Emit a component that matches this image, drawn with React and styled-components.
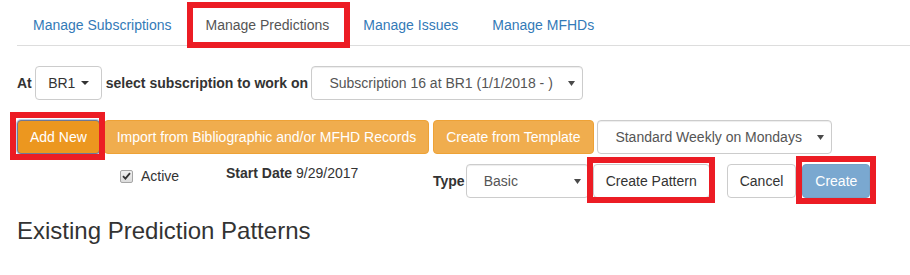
import React from "react";
import styled, { createGlobalStyle, css } from "styled-components";

const GlobalStyle = createGlobalStyle`
  html, body {
    margin: 0;
    padding: 0;
    background: #fff;
  }
  body {
    font-family: "Liberation Sans", Arial, Helvetica, sans-serif;
    font-size: 14px;
    line-height: 20px;
    color: #333;
  }
  * { box-sizing: border-box; }
`;

const Page = styled.div`
  padding: 4px 0 20px 17px;
`;

const TabBar = styled.ul`
  display: flex;
  list-style: none;
  margin: 0;
  padding: 0;
  border-bottom: 1px solid #ddd;
`;

const TabItem = styled.li`
  margin-bottom: -1px;
  display: flex;
`;

const TabLink = styled.a`
  display: block;
  padding: 10px 15px;
  margin-right: 2px;
  line-height: 20px;
  border: 1px solid transparent;
  border-radius: 4px 4px 0 0;
  text-decoration: none;
  cursor: pointer;
  color: ${(p) => (p.$active ? "#555" : "#337ab7")};
  ${(p) =>
    p.$active &&
    css`
      background: #fff;
      border-color: #ddd #ddd transparent;
    `}
`;

const Highlight = styled.span`
  position: relative;
  display: inline-flex;
  &::after {
    content: "";
    position: absolute;
    top: ${(p) => -p.$t}px;
    right: ${(p) => -p.$r}px;
    bottom: ${(p) => -p.$b}px;
    left: ${(p) => -p.$l}px;
    border: 6px solid #ec1c24;
    pointer-events: none;
  }
`;

const Toolbar = styled.div`
  display: flex;
  align-items: center;
  margin-top: ${(p) => p.$mt}px;
  gap: ${(p) => p.$gap}px;
`;

const Label = styled.span`
  font-weight: bold;
  white-space: nowrap;
  margin-right: ${(p) => p.$mr || 0}px;
`;

const variants = {
  default: css`
    color: #333;
    background: #fff;
    border-color: #ccc;
  `,
  warning: css`
    color: #fff;
    background: #f0ad4e;
    border-color: #eea236;
  `,
  warningFocus: css`
    color: #fff;
    background: #ec971f;
    border-color: #6f7896;
    box-shadow: 0 0 0 1px #b8cfec;
  `,
  primaryDisabled: css`
    color: #fff;
    background: #7aa8d0;
    border-color: #77a1c6;
  `,
};

const Button = styled.button`
  display: inline-flex;
  align-items: center;
  height: 34px;
  padding: 6px 12px;
  font-family: inherit;
  font-size: 14px;
  line-height: 20px;
  white-space: nowrap;
  border: 1px solid;
  border-radius: 4px;
  cursor: pointer;
  ${(p) => variants[p.$variant || "default"]}
`;

const Caret = styled.span`
  display: inline-block;
  width: 0;
  height: 0;
  margin-left: 6px;
  border-top: 4px solid #333;
  border-left: 4px solid transparent;
  border-right: 4px solid transparent;
`;

const SelectBox = styled.div`
  display: flex;
  align-items: center;
  justify-content: space-between;
  width: ${(p) => p.$w}px;
  height: 34px;
  padding: 0 7px 0 17px;
  border: 1px solid #ccc;
  border-radius: 4px;
  background: #fff;
  color: #555;
  white-space: nowrap;
  box-shadow: inset 0 1px 1px rgba(0, 0, 0, 0.075);
`;

const SelectArrow = () => (
  <svg width="7" height="5" viewBox="0 0 7 5" aria-hidden="true">
    <polygon points="0,0 7,0 3.5,5" fill="#4a4a4a" />
  </svg>
);

const Select = ({ w, children }) => (
  <SelectBox $w={w}>
    <span>{children}</span>
    <SelectArrow />
  </SelectBox>
);

const DetailRow = styled.div`
  display: flex;
  align-items: flex-start;
  margin-top: 10px;
  padding-left: 103px;
`;

const CheckField = styled.label`
  display: flex;
  align-items: center;
  gap: 8px;
  width: 106px;
  margin-top: 2px;
`;

const CheckBox = styled.span`
  display: inline-flex;
  align-items: center;
  justify-content: center;
  width: 13px;
  height: 13px;
  border: 1px solid #a6a6a6;
  border-radius: 2px;
  background: linear-gradient(#f0f0f0, #dcdcdc);
`;

const StaticField = styled.div`
  width: 207px;
  margin-top: -1px;
  white-space: nowrap;
`;

const TypeGroup = styled.div`
  display: flex;
  align-items: center;
  height: 34px;
`;

const Spaced = styled.span`
  display: inline-flex;
  margin-left: ${(p) => p.$ml || 0}px;
`;

const Heading = styled.h3`
  margin: 20px 0 10px;
  font-size: 24px;
  line-height: 1.1;
  font-weight: normal;
  color: #333;
`;

const tabs = [
  "Manage Subscriptions",
  "Manage Predictions",
  "Manage Issues",
  "Manage MFHDs",
];

export default function App() {
  return (
    <>
      <GlobalStyle />
      <Page>
        <TabBar>
          {tabs.map((t) => {
            const active = t === "Manage Predictions";
            const link = <TabLink $active={active}>{t}</TabLink>;
            return (
              <TabItem key={t}>
                {active ? (
                  <Highlight $t={2} $r={3} $b={2} $l={3}>
                    {link}
                  </Highlight>
                ) : (
                  link
                )}
              </TabItem>
            );
          })}
        </TabBar>

        <Toolbar $mt={20} $gap={3.4}>
          <Label>At</Label>
          <Button>
            BR1
            <Caret />
          </Button>
          <Label>select subscription to work on</Label>
          <Select w={272}>Subscription 16 at BR1 (1/1/2018 - )</Select>
        </Toolbar>

        <Toolbar $mt={20} $gap={3.9}>
          <Highlight $t={8} $r={5} $b={6} $l={7}>
            <Button $variant="warningFocus">Add New</Button>
          </Highlight>
          <Button $variant="warning">
            Import from Bibliographic and/or MFHD Records
          </Button>
          <Button $variant="warning">Create from Template</Button>
          <Select w={235}>Standard Weekly on Mondays</Select>
        </Toolbar>

        <DetailRow>
          <CheckField>
            <CheckBox>
              <svg width="9" height="8" viewBox="0 0 9 8" aria-hidden="true">
                <path
                  d="M1 4.2 L3.4 6.6 L8 1.2"
                  fill="none"
                  stroke="#333"
                  strokeWidth="1.8"
                />
              </svg>
            </CheckBox>
            Active
          </CheckField>
          <StaticField>
            <Label>Start Date</Label> 9/29/2017
          </StaticField>
          <TypeGroup>
            <Label $mr={1}>Type</Label>
            <Select w={123}>Basic</Select>
            <Spaced $ml={4}>
              <Highlight $t={7} $r={5} $b={5} $l={6}>
                <Button>Create Pattern</Button>
              </Highlight>
            </Spaced>
            <Spaced $ml={17}>
              <Button>Cancel</Button>
            </Spaced>
            <Spaced $ml={6}>
              <Highlight $t={8} $r={6} $b={6} $l={6}>
                <Button $variant="primaryDisabled">Create</Button>
              </Highlight>
            </Spaced>
          </TypeGroup>
        </DetailRow>

        <Heading>Existing Prediction Patterns</Heading>
      </Page>
    </>
  );
}
